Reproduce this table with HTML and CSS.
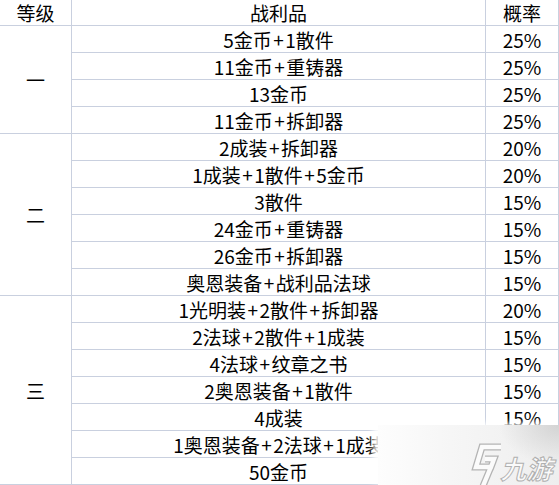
FILE: index.html
```html
<!DOCTYPE html>
<html lang="zh">
<head>
<meta charset="utf-8">
<link rel="stylesheet" href="styles.css">
</head>
<body>
<div class="page">
  <div class="loot">
    <div class="cell head">等级</div>
    <div class="cell head">战利品</div>
    <div class="cell head">概率</div>

    <div class="cell rank r1">一</div>
    <div class="cell">5金币<i class="p">+</i>1散件</div><div class="cell">25%</div>
    <div class="cell">11金币<i class="p">+</i>重铸器</div><div class="cell">25%</div>
    <div class="cell">13金币</div><div class="cell">25%</div>
    <div class="cell">11金币<i class="p">+</i>拆卸器</div><div class="cell">25%</div>

    <div class="cell rank r2">二</div>
    <div class="cell">2成装<i class="p">+</i>拆卸器</div><div class="cell">20%</div>
    <div class="cell">1成装<i class="p">+</i>1散件<i class="p">+</i>5金币</div><div class="cell">20%</div>
    <div class="cell">3散件</div><div class="cell">15%</div>
    <div class="cell">24金币<i class="p">+</i>重铸器</div><div class="cell">15%</div>
    <div class="cell">26金币<i class="p">+</i>拆卸器</div><div class="cell">15%</div>
    <div class="cell">奥恩装备<i class="p">+</i>战利品法球</div><div class="cell">15%</div>

    <div class="cell rank r3">三</div>
    <div class="cell">1光明装<i class="p">+</i>2散件<i class="p">+</i>拆卸器</div><div class="cell">20%</div>
    <div class="cell">2法球<i class="p">+</i>2散件<i class="p">+</i>1成装</div><div class="cell">15%</div>
    <div class="cell">4法球<i class="p">+</i>纹章之书</div><div class="cell">15%</div>
    <div class="cell">2奥恩装备<i class="p">+</i>1散件</div><div class="cell">15%</div>
    <div class="cell">4成装</div><div class="cell">15%</div>
    <div class="cell">1奥恩装备<i class="p">+</i>2法球<i class="p">+</i>1成装</div><div class="cell">15%</div>
    <div class="cell">50金币</div><div class="cell">15%</div>
  </div>

  <div class="watermark">
    <svg class="wm-logo" width="32" height="48" viewBox="0 0 32 48">
      <g fill="none" stroke-linejoin="miter" stroke-linecap="butt">
        <path d="M31 7 L12 7 L6 27 L21 27 L24 19 L15 19 M23 22 L13 46"
              stroke="#b4b4b4" stroke-width="7"/>
        <path d="M31 7 L12 7 L6 27 L21 27 L24 19 L15 19 M23 22 L13 46"
              stroke="#fbfbfb" stroke-width="4.4"/>
      </g>
    </svg>
    <span class="wm-text">九游</span>
  </div>
</div>
</body>
</html>
```

FILE: styles.css
```css
html, body {
  margin: 0;
  padding: 0;
  background: #ffffff;
}

.page {
  position: relative;
  width: 559px;
  height: 485px;
  overflow: hidden;
}

.loot {
  display: grid;
  grid-template-columns: 71px 413px 72px;
  grid-template-rows: 25px repeat(17, 26px);
  gap: 1px;
  padding: 0 1px 1px 0;
  background: #c9d0df;
  width: 559px;
  box-sizing: border-box;
  font-family: "Noto Sans CJK SC", "Noto Sans", sans-serif;
  font-size: 19px;
  color: #000;
}

.cell {
  background: #ffffff;
  display: flex;
  align-items: center;
  justify-content: center;
  white-space: nowrap;
  line-height: 1;
}

.p {
  font-style: normal;
  margin: 0 1.5px;
}

.rank { grid-column: 1; }
.r1 { grid-row: 2 / span 4; }
.r2 { grid-row: 6 / span 6; }
.r3 { grid-row: 12 / span 7; }

.watermark {
  position: absolute;
  left: 378px;
  top: 425px;
  width: 181px;
  height: 60px;
  background:
    radial-gradient(ellipse 60px 40px at 100% 0%, rgba(200,200,200,0.7), rgba(220,220,220,0) 100%),
    linear-gradient(90deg, #fdfdfd 0%, #f6f6f6 40%, #eeeeee 100%);
  box-shadow: -5px -2px 6px rgba(255,255,255,0.9);
  display: flex;
  align-items: flex-end;
  padding: 0 0 0 92px;
  box-sizing: border-box;
  gap: 1px;
}

.wm-logo {
  flex: none;
  margin-bottom: -3px;
}

.wm-text {
  flex: none;
  white-space: nowrap;
  font-family: "Noto Sans CJK SC", sans-serif;
  font-size: 26px;
  font-weight: 700;
  line-height: 1;
  color: #fafafa;
  -webkit-text-stroke: 1px #b0b0b0;
  transform: skewX(-14deg);
  margin-bottom: 4px;
}
```
